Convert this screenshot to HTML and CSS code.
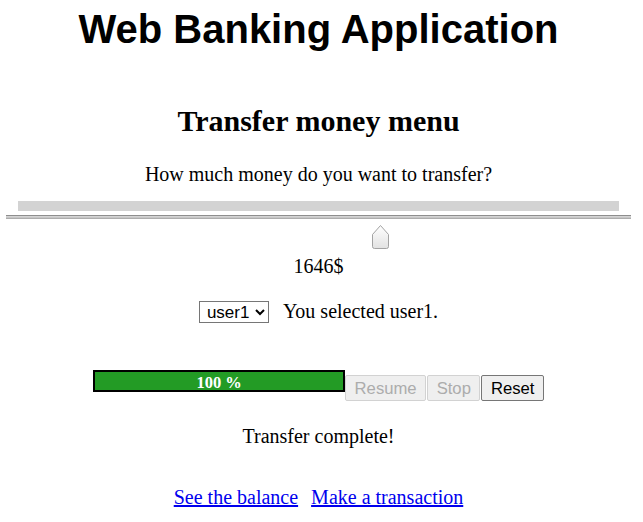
FILE: index.html
```html
<!DOCTYPE html>
<html lang="en">
<head>
<meta charset="utf-8">
<title>Web Banking Application</title>
<link rel="stylesheet" href="styles.css">
</head>
<body>
<div class="app">
  <h1 class="title">Web Banking Application</h1>
  <h2 class="subtitle">Transfer money menu</h2>
  <p class="question">How much money do you want to transfer?</p>
  <div class="track-bar"></div>
  <div class="rule"></div>
  <div class="thumb-row">
    <svg class="thumb" style="margin-left: 58.4%" width="19" height="26" viewBox="0 0 19 26">
      <defs>
        <linearGradient id="tg" x1="0" y1="0" x2="0" y2="1">
          <stop offset="0" stop-color="#ffffff"/>
          <stop offset="1" stop-color="#e2e2e2"/>
        </linearGradient>
      </defs>
      <path d="M1.5 10.5 L9.5 1.5 L17.5 10.5 V22.5 Q17.5 24.5 15.5 24.5 H3.5 Q1.5 24.5 1.5 22.5 Z" fill="url(#tg)" stroke="#a3a3a3" stroke-width="1"/>
    </svg>
  </div>
  <p class="amount">1646$</p>
  <div class="user-row">
    <select class="user-select">
      <option>user1</option>
      <option>user2</option>
    </select>
    <span class="user-text">You selected user1.</span>
  </div>
  <div class="progress-row">
    <div class="progress"><div class="progress-fill" style="width: 100%">100 %</div></div><button class="btn" disabled>Resume</button><button class="btn" disabled>Stop</button><button class="btn">Reset</button>
  </div>
  <p class="status">Transfer complete!</p>
  <div class="links">
    <a href="#">See the balance</a>
    <a href="#">Make a transaction</a>
  </div>
</div>
</body>
</html>
```
FILE: styles.css
```css
html, body {
  margin: 0;
  padding: 0;
  background: #ffffff;
}

.app {
  width: 625px;
  margin-left: 6px;
  display: flex;
  flex-direction: column;
  align-items: stretch;
  font-family: "Liberation Serif", "Times New Roman", serif;
  font-size: 20px;
  line-height: 23px;
  color: #000;
  text-align: center;
}

.title {
  margin: 6px 0 0;
  font-family: "Liberation Sans", Arial, sans-serif;
  font-weight: 700;
  font-size: 40px;
  line-height: 46px;
}

.subtitle {
  margin: 52px 0 0;
  font-family: "Liberation Serif", "Times New Roman", serif;
  font-weight: 700;
  font-size: 30px;
  line-height: 34px;
}

.question {
  margin: 25px 0 0;
}

.track-bar {
  margin: 15px 12px 0;
  height: 10px;
  background: #d3d3d3;
}

.rule {
  margin-top: 4px;
  height: 4px;
  background: linear-gradient(#8e8e8e 0 1px, #d4d4d4 1px 2px, #c6c6c6 2px 3px, #adadad 3px 4px);
}

.thumb-row {
  margin-top: 5px;
  height: 26px;
  display: flex;
}

.thumb {
  display: block;
}

.amount {
  margin: 5px 0 0;
}

.user-row {
  margin-top: 22px;
  display: flex;
  justify-content: center;
  align-items: center;
  gap: 14px;
  height: 23px;
}

.user-select {
  font-family: "Liberation Sans", Arial, sans-serif;
  font-size: 17px;
  color: #000;
  height: 22px;
  border: 1px solid #767676;
  border-radius: 0;
  background: #fff;
  padding: 0 2px 0 3px;
}

.progress-row {
  margin-top: 47px;
  display: flex;
  justify-content: center;
  align-items: flex-start;
}

.progress {
  width: 248px;
  height: 18px;
  border: 2px solid #000;
  background: #fff;
}

.progress-fill {
  height: 18px;
  background: #239b25;
  color: #fff;
  font-family: "Liberation Serif", "Times New Roman", serif;
  font-weight: 700;
  font-size: 16.5px;
  line-height: 21px;
  text-align: center;
}

.btn {
  margin: 5px 0 0 1px;
  font-family: "Liberation Sans", Arial, sans-serif;
  font-size: 16.67px;
  line-height: 19px;
  padding: 3px 8.5px 2px;
  background: #efefef;
  border: 1px solid #767676;
  border-radius: 2px;
  color: #000;
}

.btn:first-of-type {
  margin-left: 0;
}

.btn:disabled {
  color: #acacac;
  border-color: #d2d2d2;
  background: #efefef;
}

.status {
  margin: 24px 0 0;
}

.links {
  margin-top: 38px;
  display: flex;
  justify-content: center;
  gap: 13px;
}

.links a {
  color: #0000ee;
  text-decoration: underline;
}
```
